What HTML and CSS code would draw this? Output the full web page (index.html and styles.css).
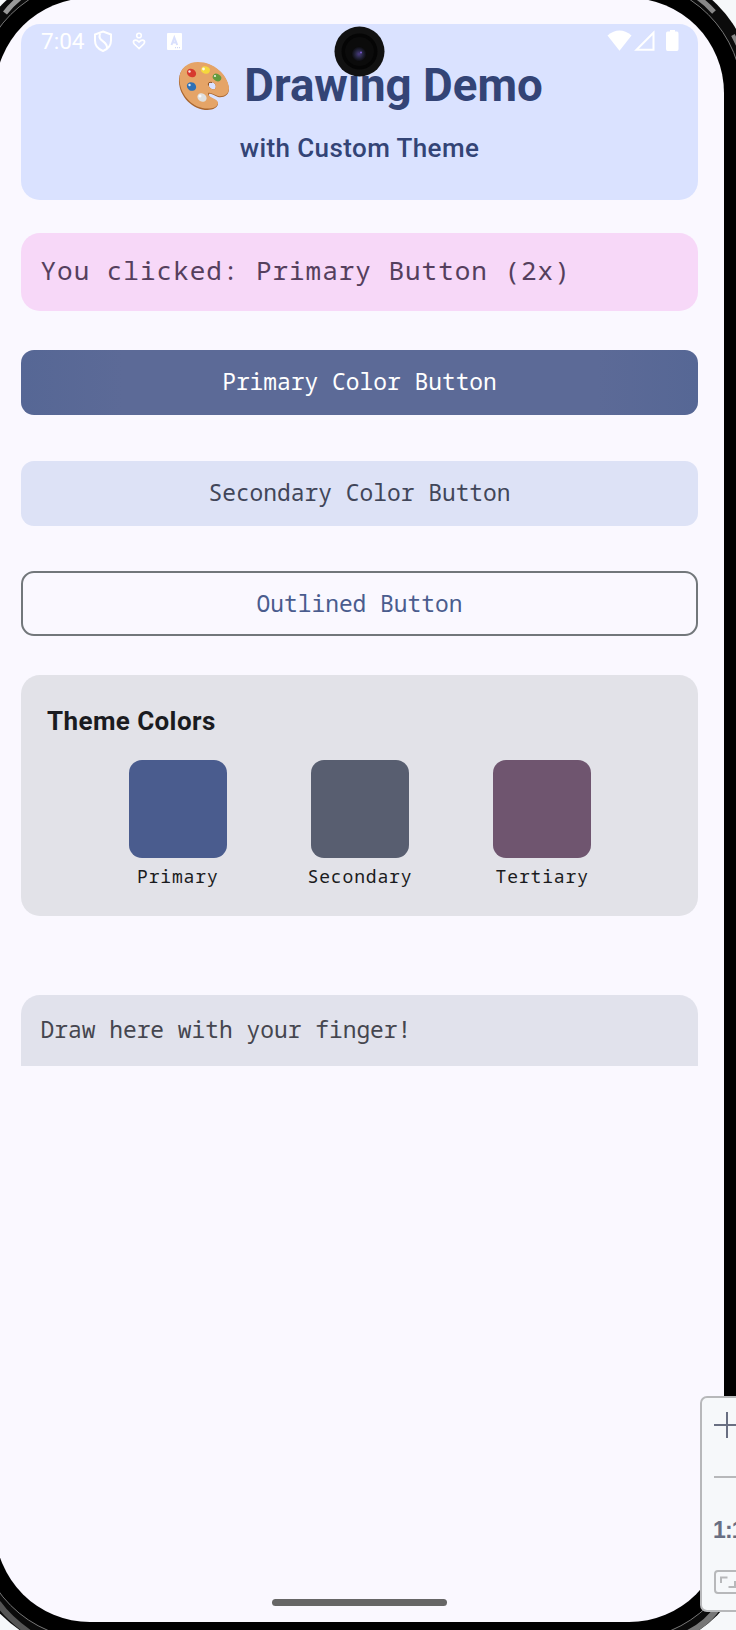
FILE: index.html
```html
<!DOCTYPE html>
<html lang="en">
<head>
<meta charset="utf-8">
<title>Drawing Demo</title>
<link rel="stylesheet" href="styles.css">
</head>
<body>
<div class="stage">
  <div class="phone">
    <svg class="glints" width="736" height="1630" viewBox="0 0 736 1630" fill="none">
      <path d="M5 13Q12 4 21 -3" stroke="#999" stroke-width="5"/>
      <path d="M697 -3Q706 3 714 12" stroke="#888" stroke-width="5"/>
      <path d="M733 35Q737 43 741 52" stroke="#888" stroke-width="4"/>
      <path d="M-2 1603Q10 1620 34 1636" stroke="#555" stroke-width="6"/>
      <path d="M688 1633Q707 1624 719 1606" stroke="#777" stroke-width="6"/>
    </svg>
    <div class="rim"></div>
    <div class="screen"></div>
  </div>

  <main class="app">
    <header class="hero">
      <h1 class="hero-title">
        <svg class="palette" width="52" height="49" viewBox="0 0 52 49">
          <path fill="#a8652f" fill-rule="evenodd" d="M1 18C2 7 10 2 20 2C36 1 50 15 51 28C51 34 46 37 40 36C36 35 34 32 31 33C30 38 40 38 40 43C39 48 33 49 27 49C12 47 0 33 1 18ZM31 22C29 25 34 30 37 28C40 24 34 19 31 22Z"/>
          <path fill="#e5a467" fill-rule="evenodd" d="M1.500 17C2 7 10 1 20 1C36 1 50 14 51 27C51 33 46 36 40 35C36 34 33 31 30 32C29 37 40 37 40 42C39 47 33 48 27 47.500C13 46 1 32 1.500 17ZM31 22C29 25 34 30 37 28C40 24 34 19 31 22Z"/>
          <path fill="none" stroke="#8a4f24" d="M30.500 24.500Q29.500 20.500 34 21.500"/>
          <ellipse cx="13.500" cy="12" rx="4.800" ry="4" fill="#d7392e" transform="rotate(30 13.500 12)"/>
          <ellipse cx="27.500" cy="9" rx="4.500" ry="3.600" fill="#f5d83c" transform="rotate(20 27.500 9)"/>
          <ellipse cx="39" cy="16.500" rx="4.500" ry="3.500" fill="#649a3d" transform="rotate(30 39 16.500)"/>
          <ellipse cx="13.500" cy="25.500" rx="4.800" ry="4.200" fill="#2e70b5" transform="rotate(30 13.500 25.500)"/>
          <ellipse cx="24" cy="36.500" rx="4.800" ry="4" fill="#dfdfdf" transform="rotate(30 24 36.500)"/>
          <g fill="#fff" opacity=".85"><circle cx="11.500" cy="10.500" r="1.200"/><circle cx="25.500" cy="8" r="1.400"/><circle cx="37" cy="15" r="1.100"/><circle cx="11.500" cy="24" r="1.200"/><circle cx="22" cy="35" r="1.500"/></g>
        </svg>
        <span class="hero-text">Drawing Demo</span>
      </h1>
      <p class="hero-sub">with Custom Theme</p>
    </header>
    <p class="status-card">You clicked: Primary Button (2x)</p>
    <div class="buttons">
      <button class="btn btn-primary">Primary Color Button</button>
      <button class="btn btn-secondary">Secondary Color Button</button>
      <button class="btn btn-outlined">Outlined Button</button>
    </div>
    <section class="theme-card">
      <h2 class="theme-title">Theme Colors</h2>
      <div class="swatches">
        <div class="swatch"><div class="chip chip-primary"></div><span>Primary</span></div>
        <div class="swatch"><div class="chip chip-secondary"></div><span>Secondary</span></div>
        <div class="swatch"><div class="chip chip-tertiary"></div><span>Tertiary</span></div>
      </div>
    </section>
    <div class="draw-card">Draw here with your finger!</div>
  </main>

  <div class="statusbar">
    <span class="clock">7:04</span>
    <svg class="sb-left" width="92" height="24" viewBox="0 0 92 24" fill="none" stroke="#fff">
      <path d="M11 1.500L19 4.500V10.500Q19 18 11 21Q3 18 3 10.500V4.500Z" stroke-width="2"/>
      <path d="M8 3.500C5 12.500 16 10 15 18.500" stroke-width="2"/>
      <circle cx="47" cy="5.500" r="2.300" stroke-width="1.600"/>
      <path d="M47 18.500L42.300 14C39.500 10.500 44 8.500 47 12C50 8.500 54.500 10.500 51.700 14Z" stroke-width="1.700"/>
      <rect x="75" y="3" width="15" height="17" rx="1" fill="#fff" stroke="none"/>
      <path d="M79.500 15L82.300 7.500L85.200 15M80.700 12.500H84" stroke="#d9e0fd" stroke-width="2"/>
      <path d="M83 17.700H89" stroke="#c5cff5" stroke-width="1" stroke-dasharray="1 1"/>
    </svg>
    <svg class="sb-right" width="74" height="24" viewBox="0 0 74 24">
      <path fill="#fff" d="M.5 5.500Q12.500-4.500 24.500 5.500L12.500 20.700Z"/>
      <path fill="none" stroke="#fff" stroke-width="2" d="M29.500 19.700H46.500V2.700Z"/>
      <path fill="#fff" d="M63 0H68V1.500H70Q71.500 1.500 71.500 3.500V19Q71.500 21 70 21H60.500Q59 21 59 19V3.500Q59 1.500 60.500 1.500H63Z"/>
    </svg>
  </div>

  <svg class="camera" width="51" height="51" viewBox="0 0 51 51">
    <defs><radialGradient id="lens"><stop offset="0" stop-color="#4a3a80"/><stop offset=".5" stop-color="#252540"/><stop offset="1" stop-color="#090909"/></radialGradient></defs>
    <circle cx="25.500" cy="25.500" r="25" fill="#111"/>
    <circle cx="25.500" cy="25.500" r="18" fill="#050505"/>
    <circle cx="25.500" cy="25.500" r="14.500" fill="#0b0b0b"/>
    <circle cx="25" cy="28" r="7.500" fill="url(#lens)"/>
    <circle cx="27" cy="26.500" r="1" fill="#7b5bd0"/>
  </svg>

  <div class="home-bar"></div>

  <aside class="zoom-panel">
    <svg class="plus" width="26" height="26" viewBox="0 0 26 26" stroke="#696f82" stroke-width="2"><path d="M0 13H26M13 0V26"/></svg>
    <div class="rule"></div>
    <div class="ratio">1:1</div>
    <svg class="fit" width="36" height="24" viewBox="0 0 36 24" fill="none" stroke="#b7b8ba" stroke-width="2"><rect x="1" y="1" width="34" height="22" rx="3"/><path d="M7 13V7.500H13.500M14.500 17H21V11"/></svg>
  </aside>
</div>
</body>
</html>
```

FILE: styles.css
```css
* { box-sizing: border-box; }
body { margin: 0; background: #f6f8fa; }
h1, h2, p { margin: 0; font-weight: inherit; }

.stage { position: relative; width: 736px; height: 1630px; overflow: hidden; }

/* Device frame, layered behind the app */
.phone { position: absolute; inset: 0; }
.phone::before { content: ""; position: absolute; left: -34px; top: -31px; width: 787px; height: 1682px; border-radius: 122px; background: #0b0b0b; }
.glints { position: absolute; left: 0; top: 0; }
.rim { position: absolute; left: -24px; top: -20px; width: 767px; height: 1660px; border-radius: 117px; background: #000; border: 1px solid #777; }
.screen { position: absolute; left: -5px; top: -2px; width: 729px; height: 1624px; border-radius: 95px; background: #faf8ff; }

.app { position: relative; display: flex; flex-direction: column; width: 677px; margin-left: 21px; padding-top: 24px; font-family: "Noto Sans Mono", "DejaVu Sans Mono", monospace; }

.hero { height: 176px; padding-top: 35px; border-radius: 19px; background: #dae2ff; color: #334476; font-family: Roboto, sans-serif; text-align: center; }
.hero-title { display: flex; justify-content: center; align-items: center; gap: 14px; height: 52px; padding-left: 2px; font-size: 45.700px; font-weight: 700; line-height: 54px; }
.hero-text { padding-top: 2px; }
.hero-sub { margin-top: 20px; font-size: 26px; font-weight: 500; line-height: 34px; letter-spacing: .4px; }

.status-card { height: 78px; margin-top: 32.500px; padding-left: 19.500px; border-radius: 19px; background: #f7d8f8; color: #553f5d; font-size: 26px; line-height: 75px; letter-spacing: .97px; }

.buttons { display: flex; flex-direction: column; gap: 45.500px; margin-top: 39.500px; }
.btn { height: 65px; padding: 0 0 2px; border: 0; border-radius: 13px; font: 22.900px "Noto Sans Mono", "DejaVu Sans Mono", monospace; }
.btn-primary { background: linear-gradient(90deg, #566795, #5c6a97 15%, #5c6a97 85%, #566795); color: #fff; }
.btn-secondary { background: #dde2f6; color: #414659; }
.btn-outlined { padding-bottom: 0; border: 2px solid #72777b; background: transparent; color: #4a5c8e; }

.theme-card { height: 241px; margin-top: 39px; padding: 28px 26px 0; border-radius: 19px; background: #e2e2e8; color: #1a1b20; }
.theme-title { font: 700 26px/36px Roboto, sans-serif; letter-spacing: .4px; }
.swatches { display: flex; justify-content: space-evenly; margin-top: 21px; padding-left: 1px; }
.swatch { display: flex; flex-direction: column; align-items: center; gap: 5px; font-size: 18px; line-height: 26px; letter-spacing: .85px; }
.chip { width: 98px; height: 98px; border-radius: 13px; }
.chip-primary { background: #4a5c8e; }
.chip-secondary { background: #585e70; }
.chip-tertiary { background: #6f556f; }

.draw-card { height: 71.500px; margin-top: 78.500px; padding-left: 19.500px; border-radius: 19px 19px 0 0; background: #e1e2ec; color: #45464f; font-size: 22.900px; line-height: 69px; }

/* System overlays */
.statusbar { position: absolute; left: 41px; top: 30px; width: 640px; height: 24px; display: flex; color: #fff; }
.clock { width: 51px; font: 22.600px/24px Roboto, sans-serif; }
.sb-right { margin-left: auto; }
.camera { position: absolute; left: 334px; top: 26px; }
.home-bar { position: absolute; left: 272px; top: 1599px; width: 175px; height: 7px; border-radius: 4px; background: #666; }

.zoom-panel { position: absolute; left: 700px; top: 1396px; width: 70px; height: 216px; padding: 14px 0 0 12px; border: 2px solid #b7b8ba; border-radius: 7px; background: #f6f8fa; display: flex; flex-direction: column; align-items: flex-start; }
.rule { width: 36px; height: 2px; margin-top: 38px; background: #b7b8ba; }
.ratio { margin-top: 39px; margin-left: -1px; color: #696f82; font: 700 23px/26px "Liberation Sans", Arial, sans-serif; letter-spacing: -.8px; }
.fit { margin-top: 27px; }
```
